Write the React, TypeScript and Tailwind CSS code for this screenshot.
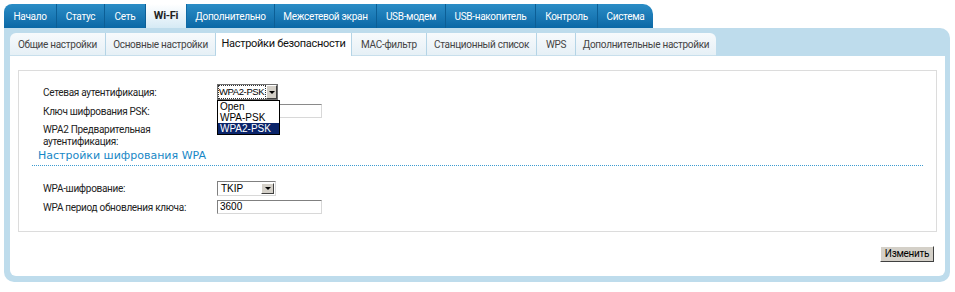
import React from "react";

const topTabs: { label: string; w: string; active?: boolean }[] = [
  { label: "Начало", w: "w-[53px]" },
  { label: "Статус", w: "w-[48px]" },
  { label: "Сеть", w: "w-[41px]" },
  { label: "Wi-Fi", w: "w-[41px]", active: true },
  { label: "Дополнительно", w: "w-[88px]" },
  { label: "Межсетевой экран", w: "w-[102px]" },
  { label: "USB-модем", w: "w-[69px]" },
  { label: "USB-накопитель", w: "w-[90px]" },
  { label: "Контроль", w: "w-[62px]" },
  { label: "Система", w: "w-[55px]" },
];

const subTabs: { label: string; w: string; active?: boolean }[] = [
  { label: "Общие настройки", w: "w-[96px]" },
  { label: "Основные настройки", w: "w-[110px]" },
  { label: "Настройки безопасности", w: "w-[136px]", active: true },
  { label: "MAC-фильтр", w: "w-[75px]" },
  { label: "Станционный список", w: "w-[110px]" },
  { label: "WPS", w: "w-[39px]" },
  { label: "Дополнительные настройки", w: "w-[140px]" },
];

function Arrow({ w }: { w: string }) {
  return (
    <div className={w + " shrink-0 h-full bg-[#d4d0c8] border-t border-l border-t-white border-l-white border-b border-r border-b-[#404040] border-r-[#404040] flex items-center justify-center"}>
      <div className="w-0 h-0 border-l-[3px] border-r-[3px] border-t-[3px] border-l-transparent border-r-transparent border-t-black" />
    </div>
  );
}

export default function App() {
  return (
    <div className="w-[955px] h-[292px] bg-white text-[10px] tracking-[-0.3px] text-[#222] font-['Roboto',sans-serif] whitespace-nowrap">
      <div className="pt-[4px] pl-[4px] pr-[5px]">
        {/* top tabs */}
        <div className="flex h-[24px]">
          {topTabs.map((t, i) => (
            <div
              key={t.label}
              className={
                t.w +
                " flex items-center justify-center h-full border-r " +
                (t.active
                  ? "bg-gradient-to-b from-white to-[#d6eaf5] text-[#222] font-bold text-[11px] border-r-[#0f6aa5]"
                  : "bg-gradient-to-b from-[#2a8dc6] to-[#0a68a6] text-white border-r-[#0c5f96]") +
                (i === 0 ? " rounded-tl-[8px]" : "") +
                (i === topTabs.length - 1 ? " rounded-tr-[10px] border-r-0" : "")
              }
            >
              {t.label}
            </div>
          ))}
        </div>
        {/* panel */}
        <div className="bg-[#bedcec] rounded-tr-[10px] rounded-b-[10px] pt-[5px] pl-[6px] pr-[5px] pb-[6px]">
          {/* sub tabs */}
          <div className="flex h-[23px]">
            {subTabs.map((t, i) => (
              <div
                key={t.label}
                className={
                  t.w +
                  " flex items-center justify-center h-full border-r border-r-[#b4d4e6] " +
                  (t.active
                    ? "bg-white text-[#111] text-[11px]"
                    : "bg-gradient-to-b from-[#f7fafc] to-[#e6f0f6] text-[#444] border-b border-b-[#c8dfec]") +
                  (i === 0 ? " rounded-tl-[6px]" : "") +
                  (i === subTabs.length - 1 ? " rounded-tr-[6px] border-r-0" : "")
                }
              >
                {t.label}
              </div>
            ))}
          </div>
          {/* white content */}
          <div className="bg-white rounded-b-[6px] pt-[14px] pl-[8px] pr-[8px] pb-[14px] h-[220px] flex flex-col">
            <div className="border border-[#dcdcdc] h-[163px] pl-[24px] pr-[13px] flex flex-col">
              {/* row 1 */}
              <div className="flex mt-[13px] h-[16px] items-center">
                <div className="w-[174px]">Сетевая аутентификация:</div>
                <div className="relative tracking-normal font-['Liberation_Sans',sans-serif]">
                  <div className="w-[61px] h-[16px] border border-[#6f6f6f] bg-white flex items-stretch">
                    <div className="flex-1 min-w-0 border border-dotted border-[#333] flex items-center leading-none text-black text-[9.5px] tracking-[-0.4px]">WPA2-PSK</div>
                    <Arrow w="w-[11px]" />
                  </div>
                  <div className="absolute left-0 top-[16px] w-[63px] border border-black bg-white z-10 text-black leading-[11px] text-[10px]">
                    <div className="pl-[2px] h-[11px]">Open</div>
                    <div className="pl-[2px] h-[11px]">WPA-PSK</div>
                    <div className="pl-[2px] h-[11px] bg-[#0a246a] text-white">WPA2-PSK</div>
                  </div>
                </div>
              </div>
              {/* row 2 */}
              <div className="flex mt-[4px] h-[14px] items-center">
                <div className="w-[174px]">Ключ шифрования PSK:</div>
                <div className="w-[105px] h-[14px] border border-t-[#8a8a8a] border-l-[#8a8a8a] border-b-[#d8d8d8] border-r-[#d8d8d8]" />
              </div>
              {/* row 3 */}
              <div className="flex mt-[6px] leading-[12px]">
                <div className="w-[174px]">
                  WPA2 Предварительная
                  <br />
                  аутентификация:
                </div>
              </div>
              {/* heading */}
              <div className="mt-0 -ml-[11px] border-b border-dotted border-b-[#3d9bd0] pl-[6px] h-[18px] flex items-center text-[11px] tracking-normal text-[#1787c6] font-['DejaVu_Sans',sans-serif]">
                Настройки шифрования WPA
              </div>
              {/* TKIP */}
              <div className="flex mt-[15px] h-[15px] items-center">
                <div className="w-[174px]">WPA-шифрование:</div>
                <div className="w-[59px] h-[15px] border border-t-[#808080] border-l-[#808080] border-b-[#d8d8d8] border-r-[#d8d8d8] flex items-stretch p-[1px] bg-white font-['Liberation_Sans',sans-serif] tracking-normal">
                  <div className="flex-1 flex items-center pl-[2px] text-black leading-none">TKIP</div>
                  <Arrow w="w-[13px]" />
                </div>
              </div>
              {/* 3600 */}
              <div className="flex mt-[4px] h-[14px] items-center">
                <div className="w-[174px]">WPA период обновления ключа:</div>
                <div className="w-[105px] h-[14px] border border-t-[#808080] border-l-[#808080] border-b-[#d8d8d8] border-r-[#d8d8d8] flex items-center pl-[2px] text-black leading-none font-['Liberation_Sans',sans-serif] tracking-normal">
                  3600
                </div>
              </div>
            </div>
            <div className="flex justify-end mt-[14px] pr-[3px]">
              <div className="h-[16px] w-[54px] bg-[#d4d0c8] border border-t-white border-l-white border-b-[#404040] border-r-[#404040] flex items-center justify-center text-black leading-none">
                Изменить
              </div>
            </div>
          </div>
        </div>
      </div>
    </div>
  );
}
